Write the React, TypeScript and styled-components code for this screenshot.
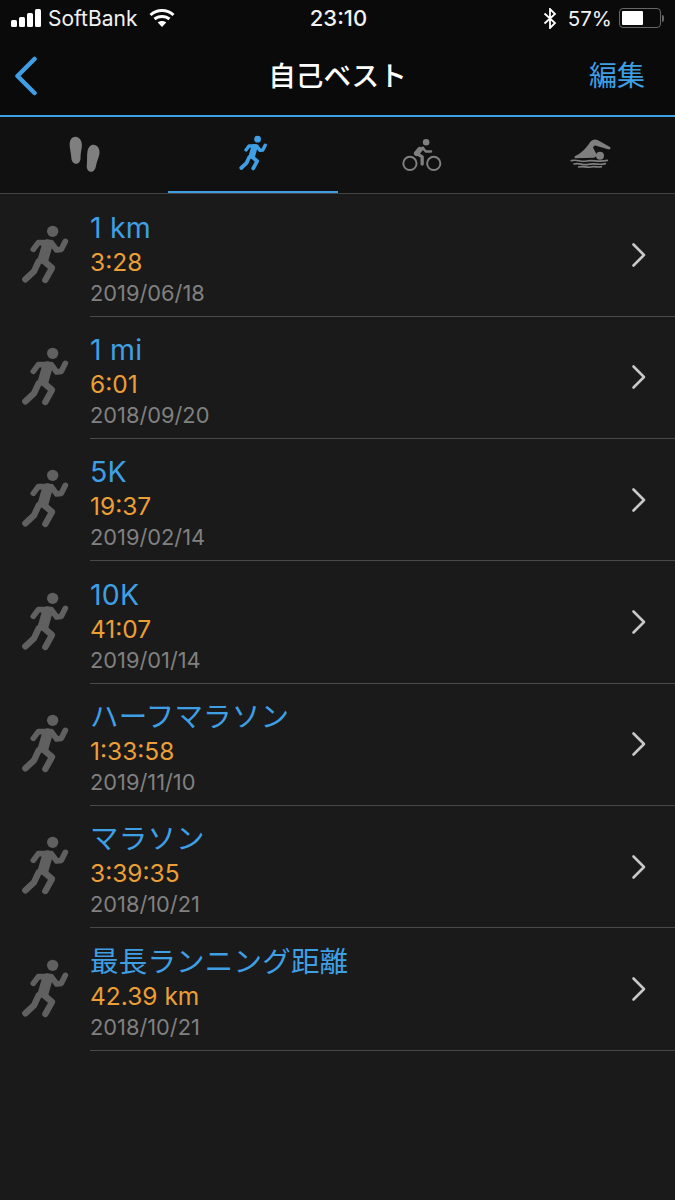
import React from "react";
import styled, { createGlobalStyle } from "styled-components";

const records = [
  { title: "1 km", value: "3:28", date: "2019/06/18" },
  { title: "1 mi", value: "6:01", date: "2018/09/20" },
  { title: "5K", value: "19:37", date: "2019/02/14" },
  { title: "10K", value: "41:07", date: "2019/01/14" },
  { title: "ハーフマラソン", value: "1:33:58", date: "2019/11/10" },
  { title: "マラソン", value: "3:39:35", date: "2018/10/21" },
  { title: "最長ランニング距離", value: "42.39 km", date: "2018/10/21" },
];

const RunnerIcon = ({ size }: { size: number }) => (
  <svg width={size} height={(size * 240) / 210} viewBox="0 0 210 240" fill="none" stroke="currentColor" strokeLinecap="round" strokeLinejoin="round">
    <circle cx="128" cy="46" r="17" fill="currentColor" stroke="none" />
    <path d="M70 100 L85 80 L124 80 L140 102 L154 100 L166 76" strokeWidth="17" />
    <path d="M112 86 L100 128" strokeWidth="32" />
    <path d="M98 132 L126 156 L106 192" strokeWidth="19" />
    <path d="M86 136 L72 166 L46 190" strokeWidth="19" />
  </svg>
);

const footPath =
  "M23 5 C34 5 42 16 42 30 C42 44 38 52 38 68 C38 80 33 87 25 87 C16 87 11 80 10 68 C9 52 5 42 5 28 C5 14 12 5 23 5 Z";

const FeetIcon = () => (
  <svg width="33" height="38" viewBox="0 0 100 115" fill="currentColor">
    <path d={footPath} />
    <path d={footPath} transform="translate(59 21) rotate(10)" />
  </svg>
);

const BikeIcon = () => (
  <svg width="43" height="37" viewBox="0 0 130 110" fill="none" stroke="currentColor" strokeLinejoin="round" strokeLinecap="round">
    <circle cx="30" cy="82" r="20" strokeWidth="6" />
    <circle cx="102" cy="82" r="20" strokeWidth="6" />
    <circle cx="79" cy="18" r="10" fill="currentColor" stroke="none" />
    <path d="M69 36 L48 50 L67 62 L67 84" strokeWidth="10" />
    <path d="M71 38 L78 46 L94 46" strokeWidth="7" />
    <path d="M60 40 L50 52" strokeWidth="16" />
  </svg>
);

const SwimIcon = () => (
  <svg width="42" height="30" viewBox="0 0 126 90" fill="currentColor">
    <path d="M14 52 C34 44 50 26 60 10 C68 0 76 0 84 4 L120 24 C124 28 120 33 114 31 L78 20 C72 19 68 24 70 28 L82 50 L72 56 L14 58 Z" />
    <circle cx="90" cy="50" r="12" />
    <path d="M4 65 C22 60 30 70 50 66 C70 62 85 70 112 64" fill="none" stroke="currentColor" strokeWidth="5" strokeLinecap="round" />
    <path d="M12 75 C28 70 38 80 56 76 C76 72 88 79 106 74" fill="none" stroke="currentColor" strokeWidth="5" strokeLinecap="round" />
    <path d="M26 84 C40 80 50 87 62 84 C76 81 84 86 94 83" fill="none" stroke="currentColor" strokeWidth="5" strokeLinecap="round" />
  </svg>
);

const App = () => (
  <Screen>
    <GlobalStyle />
    <Header>
      <StatusBar>
        <StatusLeft>
          <SignalBars>
            <Bar $height={7} />
            <Bar $height={10} />
            <Bar $height={14} />
            <Bar $height={18} />
          </SignalBars>
          <Carrier>SoftBank</Carrier>
          <svg width="26" height="20" viewBox="0 0 26 20" fill="none" stroke="#fff" strokeWidth="3">
            <path d="M1.5 7 C8 1 18 1 24.5 7" />
            <path d="M5.5 11 C9.5 7.5 16.5 7.5 20.5 11" />
            <path d="M13 19 L8.8 14.6 C11 12.6 15 12.6 17.2 14.6 Z" fill="#fff" stroke="none" />
          </svg>
        </StatusLeft>
        <Clock>23:10</Clock>
        <StatusRight>
          <svg width="14" height="21" viewBox="0 0 14 21" fill="none" stroke="#fff" strokeWidth="1.8">
            <path d="M1.5 5.5 L12 15 L7 20 L7 1 L12 6 L1.5 15.5" />
          </svg>
          <Percent>57%</Percent>
          <Battery>
            <BatteryFill $level={57} />
          </Battery>
          <BatteryNub />
        </StatusRight>
      </StatusBar>
      <NavBar>
        <BackButton>
          <svg width="24" height="40" viewBox="0 0 24 40" fill="none" stroke="#3f9fe4" strokeWidth="4.5" strokeLinecap="round" strokeLinejoin="round">
            <path d="M20.5 3 L3.5 20 L20.5 37" />
          </svg>
        </BackButton>
        <NavTitle>自己ベスト</NavTitle>
        <EditButton>編集</EditButton>
      </NavBar>
    </Header>
    <Tabs>
      <Tab><FeetIcon /></Tab>
      <Tab $active><RunnerIcon size={42} /></Tab>
      <Tab><BikeIcon /></Tab>
      <Tab><SwimIcon /></Tab>
    </Tabs>
    <List>
      {records.map((record) => (
        <Row key={record.title}>
          <RowIcon><RunnerIcon size={70} /></RowIcon>
          <RowBody>
            <RowText>
              <RowTitle>{record.title}</RowTitle>
              <RowValue>{record.value}</RowValue>
              <RowDate>{record.date}</RowDate>
            </RowText>
            <svg width="16" height="26" viewBox="0 0 16 26" fill="none" stroke="#c8c8c8" strokeWidth="2.6" strokeLinecap="round" strokeLinejoin="round">
              <path d="M2.5 2.5 L13 13 L2.5 23.5" />
            </svg>
          </RowBody>
        </Row>
      ))}
    </List>
  </Screen>
);

export default App;

const GlobalStyle = createGlobalStyle`
  html, body {
    margin: 0;
    background: #1a1a1a;
  }
`;

const Screen = styled.div`
  width: 675px;
  height: 1200px;
  overflow: hidden;
  background: #1a1a1a;
  font-family: Inter, "Noto Sans CJK JP", sans-serif;
`;

const Header = styled.header`
  height: 117px;
  box-sizing: border-box;
  background: #0a0a0a;
  border-bottom: 2px solid #3f9fe4;
`;

const StatusBar = styled.div`
  height: 36px;
  display: grid;
  grid-template-columns: 1fr auto 1fr;
  align-items: center;
  color: #f2f2f2;
`;

const StatusLeft = styled.div`
  display: flex;
  align-items: center;
  padding-left: 11px;
`;

const SignalBars = styled.div`
  display: flex;
  align-items: flex-end;
  gap: 2px;
  height: 18px;
  margin-right: 7px;
`;

const Bar = styled.span<{ $height: number }>`
  width: 6px;
  height: ${(p) => p.$height}px;
  background: #fff;
  border-radius: 1.5px;
`;

const Carrier = styled.span`
  width: 101px;
  font-size: 21px;
`;

const Clock = styled.span`
  margin-left: 2px;
  font-size: 22px;
  font-weight: 500;
`;

const StatusRight = styled.div`
  display: flex;
  align-items: center;
  justify-content: flex-end;
  padding-right: 11px;
`;

const Percent = styled.span`
  margin: 0 7px 0 11px;
  font-size: 20.5px;
`;

const Battery = styled.div`
  width: 42px;
  height: 20px;
  box-sizing: border-box;
  border: 1.5px solid #666;
  border-radius: 4px;
  padding: 2px;
`;

const BatteryFill = styled.div<{ $level: number }>`
  width: ${(p) => p.$level}%;
  height: 100%;
  background: #fff;
  border-radius: 1px;
`;

const BatteryNub = styled.span`
  width: 2px;
  height: 7px;
  margin-left: 1px;
  background: #666;
  border-radius: 0 2px 2px 0;
`;

const NavBar = styled.nav`
  height: 79px;
  display: grid;
  grid-template-columns: 1fr auto 1fr;
  align-items: center;
`;

const BackButton = styled.div`
  display: flex;
  padding-left: 14px;
`;

const NavTitle = styled.h1`
  margin: 0 0 4px;
  color: #fff;
  font-size: 27.6px;
  font-weight: 500;
`;

const EditButton = styled.div`
  justify-self: end;
  margin-bottom: 4px;
  padding-right: 30px;
  color: #3f9fe4;
  font-size: 28px;
`;

const Tabs = styled.div`
  display: grid;
  grid-template-columns: 168px 169.5px 1fr 1fr;
  height: 77px;
  box-sizing: border-box;
  background: #111;
  border-bottom: 1px solid #444;
`;

const Tab = styled.div<{ $active?: boolean }>`
  display: flex;
  align-items: center;
  justify-content: center;
  box-sizing: border-box;
  height: 76px;
  color: ${(p) => (p.$active ? "#3f9fe4" : "#7f7f7f")};
  border-bottom: 2px solid ${(p) => (p.$active ? "#3f9fe4" : "transparent")};
`;

const List = styled.div`
  display: flex;
  flex-direction: column;
  padding-top: 0.5px;
`;

const Row = styled.div`
  display: flex;
  height: 122.33px;
`;

const RowIcon = styled.div`
  width: 90px;
  box-sizing: border-box;
  padding-left: 10px;
  display: flex;
  align-items: center;
  color: #606060;
`;

const RowBody = styled.div`
  flex: 1;
  display: flex;
  align-items: center;
  justify-content: space-between;
  padding-right: 28px;
  border-bottom: 1px solid #4a4a4a;
`;

const RowText = styled.div`
  display: flex;
  flex-direction: column;
  padding-top: 7px;
`;

const RowTitle = styled.div`
  color: #3f9fe4;
  font-size: 28.5px;
  letter-spacing: 0.2px;
  line-height: 34px;
`;

const RowValue = styled.div`
  color: #eb9f36;
  font-size: 24.5px;
  line-height: 34px;
`;

const RowDate = styled.div`
  color: #808080;
  font-size: 21.8px;
  line-height: 28px;
`;
